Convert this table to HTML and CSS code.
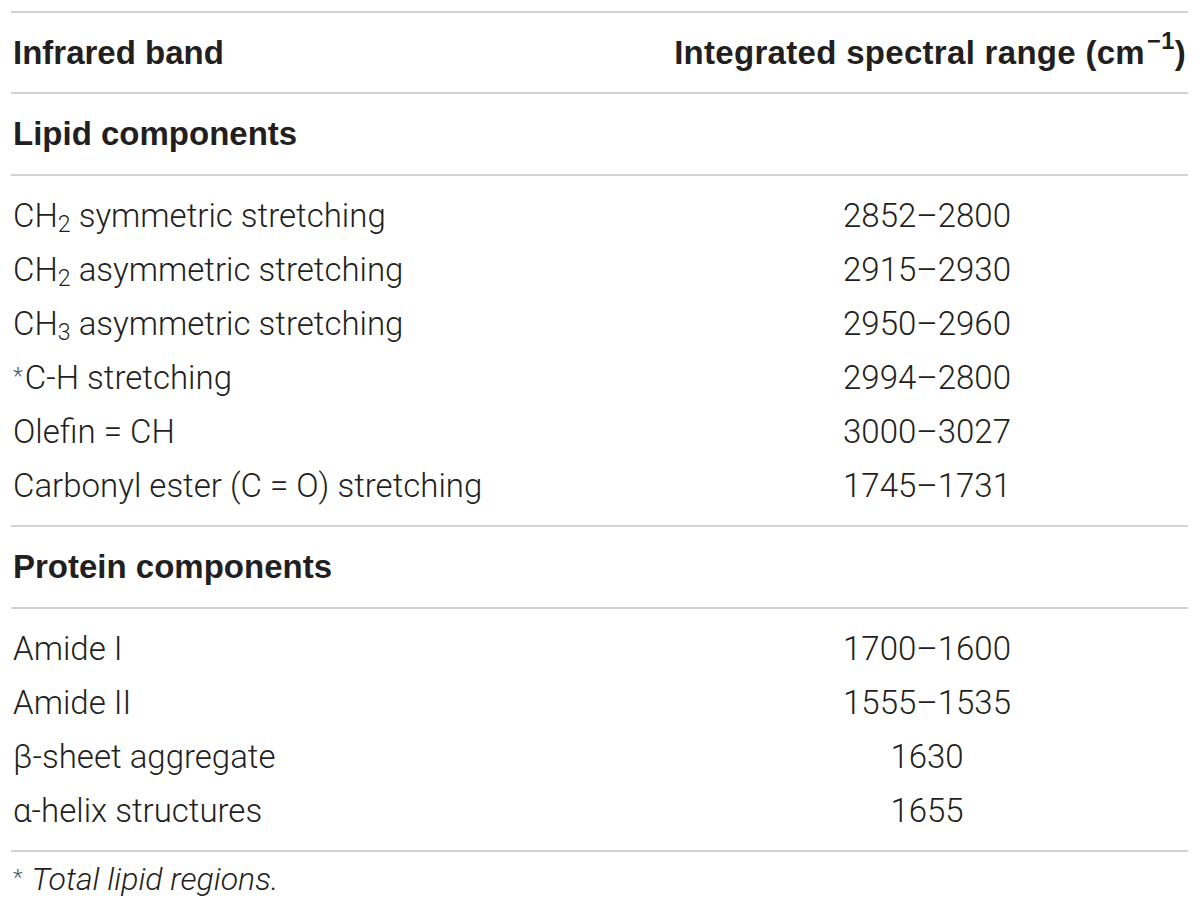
FILE: index.html
```html
<!DOCTYPE html>
<html lang="en">
<head>
<meta charset="utf-8">
<title>Infrared bands</title>
<link rel="stylesheet" href="styles.css">
</head>
<body>
<div class="wrap">
  <table class="bands">
    <thead>
      <tr class="head">
        <th class="c1">Infrared band</th>
        <th class="c2">Integrated spectral range (cm<sup>−1</sup>)</th>
      </tr>
    </thead>
    <tbody>
      <tr class="section"><td colspan="2">Lipid components</td></tr>
      <tr class="first"><td class="c1">CH<sub>2</sub> symmetric stretching</td><td class="c2">2852–2800</td></tr>
      <tr><td class="c1">CH<sub>2</sub> asymmetric stretching</td><td class="c2">2915–2930</td></tr>
      <tr><td class="c1">CH<sub>3</sub> asymmetric stretching</td><td class="c2">2950–2960</td></tr>
      <tr><td class="c1"><span class="ast">*</span>C-H stretching</td><td class="c2">2994–2800</td></tr>
      <tr><td class="c1">Olefin = CH</td><td class="c2">3000–3027</td></tr>
      <tr class="last"><td class="c1">Carbonyl ester (C = O) stretching</td><td class="c2">1745–1731</td></tr>
      <tr class="section"><td colspan="2">Protein components</td></tr>
      <tr class="first"><td class="c1">Amide I</td><td class="c2">1700–1600</td></tr>
      <tr><td class="c1">Amide II</td><td class="c2">1555–1535</td></tr>
      <tr><td class="c1">β-sheet aggregate</td><td class="c2">1630</td></tr>
      <tr class="last"><td class="c1">α-helix structures</td><td class="c2">1655</td></tr>
    </tbody>
  </table>
  <p class="note"><span class="ast">*</span><em>Total lipid regions.</em></p>
</div>
</body>
</html>
```

FILE: styles.css
```css
html, body {
  margin: 0;
  padding: 0;
  background: #ffffff;
}

body {
  font-family: "Roboto", "Liberation Sans", Arial, sans-serif;
  font-weight: 300;
  color: #231f20;
}

.wrap {
  margin: 0 12px 0 11px;
  padding-top: 11px;
}

.bands {
  width: 100%;
  border-collapse: collapse;
  table-layout: fixed;
  border-top: 2px solid #d2d2d2;
  border-bottom: 2px solid #d2d2d2;
}

.bands th,
.bands td {
  padding: 0 2px;
  font-size: 33px;
  line-height: 54px;
  white-space: nowrap;
}

.bands th {
  font-family: "Liberation Sans", Arial, sans-serif;
  font-weight: 700;
  font-size: 33px;
  color: #231f20;
}

.head th {
  height: 79px;
  border-bottom: 2px solid #d2d2d2;
  vertical-align: middle;
}

.head .c1 {
  text-align: left;
}

.head .c2 {
  text-align: right;
  width: 518px;
  letter-spacing: 0.3px;
}

.section td {
  height: 80px;
  font-family: "Liberation Sans", Arial, sans-serif;
  font-weight: 700;
  font-size: 33px;
  border-bottom: 2px solid #d2d2d2;
}

.bands tr.first td {
  padding-top: 13px;
}

.bands tr.last td {
  padding-bottom: 12px;
}

.bands tr.last + .section td {
  border-top: 2px solid #d2d2d2;
}

.c1 {
  text-align: left;
}

td.c2 {
  text-align: center;
}

sub {
  font-size: 0.7em;
  line-height: 0;
  vertical-align: -0.22em;
}

sup {
  font-size: 0.72em;
  line-height: 0;
  vertical-align: 0.6em;
  margin-left: 2px;
}

.ast {
  font-size: 0.7em;
  line-height: 0;
  vertical-align: 0.22em;
  color: #555;
  margin-right: 2px;
}

.note {
  margin: 0;
  padding: 10px 2px 0;
  font-size: 32px;
  line-height: 34px;
}

.note .ast {
  margin-right: 9px;
}

.note em {
  font-style: italic;
}
```
